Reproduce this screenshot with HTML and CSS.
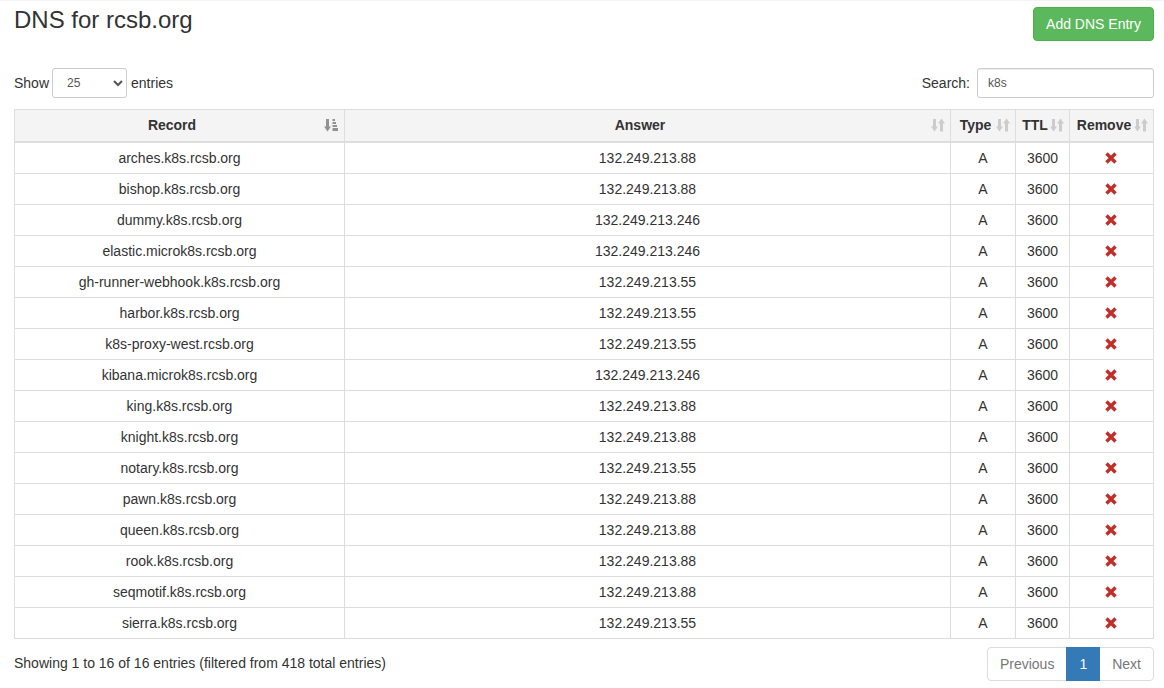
FILE: index.html
```html
<!DOCTYPE html>
<html>
<head>
<meta charset="utf-8">
<title>DNS for rcsb.org</title>
<link rel="stylesheet" href="styles.css">
</head>
<body>
<div class="page">
  <div class="topbar">
    <h1 class="title">DNS for rcsb.org</h1>
    <button class="btn-add">Add DNS Entry</button>
  </div>
  <div class="controls">
    <label class="length">Show <select class="sel"><option>25</option></select> entries</label>
    <label class="search">Search: <input class="search-input" type="text" value="k8s"></label>
  </div>
  <table class="dns">
    <colgroup>
      <col class="c-record"><col class="c-answer"><col class="c-type"><col class="c-ttl"><col class="c-remove">
    </colgroup>
    <thead>
      <tr>
        <th>Record<svg class="sort sort-asc" viewBox="0 0 14 14"><rect x="2" y="1" width="3" height="8"/><polygon points="0,8.5 7,8.5 3.5,13.5"/><rect x="8.5" y="1" width="2.5" height="2"/><rect x="8.5" y="4" width="3.5" height="2"/><rect x="8.5" y="7" width="4.5" height="2"/><rect x="8.5" y="10" width="5.5" height="3"/></svg></th>
        <th>Answer<svg class="sort" viewBox="0 0 14 14"><rect x="2" y="1" width="3" height="8"/><polygon points="0,8.5 7,8.5 3.5,13.5"/><rect x="9" y="5" width="3" height="8.5"/><polygon points="7,5.5 14,5.5 10.5,0.5"/></svg></th>
        <th>Type<svg class="sort" viewBox="0 0 14 14"><rect x="2" y="1" width="3" height="8"/><polygon points="0,8.5 7,8.5 3.5,13.5"/><rect x="9" y="5" width="3" height="8.5"/><polygon points="7,5.5 14,5.5 10.5,0.5"/></svg></th>
        <th>TTL<svg class="sort" viewBox="0 0 14 14"><rect x="2" y="1" width="3" height="8"/><polygon points="0,8.5 7,8.5 3.5,13.5"/><rect x="9" y="5" width="3" height="8.5"/><polygon points="7,5.5 14,5.5 10.5,0.5"/></svg></th>
        <th>Remove<svg class="sort" viewBox="0 0 14 14"><rect x="2" y="1" width="3" height="8"/><polygon points="0,8.5 7,8.5 3.5,13.5"/><rect x="9" y="5" width="3" height="8.5"/><polygon points="7,5.5 14,5.5 10.5,0.5"/></svg></th>
      </tr>
    </thead>
    <tbody>
      <tr><td>arches.k8s.rcsb.org</td><td>132.249.213.88</td><td>A</td><td>3600</td><td><svg class="rm" viewBox="0 0 12 12"><path d="M1.5 1.5L10.5 10.5M10.5 1.5L1.5 10.5"/></svg></td></tr>
      <tr><td>bishop.k8s.rcsb.org</td><td>132.249.213.88</td><td>A</td><td>3600</td><td><svg class="rm" viewBox="0 0 12 12"><path d="M1.5 1.5L10.5 10.5M10.5 1.5L1.5 10.5"/></svg></td></tr>
      <tr><td>dummy.k8s.rcsb.org</td><td>132.249.213.246</td><td>A</td><td>3600</td><td><svg class="rm" viewBox="0 0 12 12"><path d="M1.5 1.5L10.5 10.5M10.5 1.5L1.5 10.5"/></svg></td></tr>
      <tr><td>elastic.microk8s.rcsb.org</td><td>132.249.213.246</td><td>A</td><td>3600</td><td><svg class="rm" viewBox="0 0 12 12"><path d="M1.5 1.5L10.5 10.5M10.5 1.5L1.5 10.5"/></svg></td></tr>
      <tr><td>gh-runner-webhook.k8s.rcsb.org</td><td>132.249.213.55</td><td>A</td><td>3600</td><td><svg class="rm" viewBox="0 0 12 12"><path d="M1.5 1.5L10.5 10.5M10.5 1.5L1.5 10.5"/></svg></td></tr>
      <tr><td>harbor.k8s.rcsb.org</td><td>132.249.213.55</td><td>A</td><td>3600</td><td><svg class="rm" viewBox="0 0 12 12"><path d="M1.5 1.5L10.5 10.5M10.5 1.5L1.5 10.5"/></svg></td></tr>
      <tr><td>k8s-proxy-west.rcsb.org</td><td>132.249.213.55</td><td>A</td><td>3600</td><td><svg class="rm" viewBox="0 0 12 12"><path d="M1.5 1.5L10.5 10.5M10.5 1.5L1.5 10.5"/></svg></td></tr>
      <tr><td>kibana.microk8s.rcsb.org</td><td>132.249.213.246</td><td>A</td><td>3600</td><td><svg class="rm" viewBox="0 0 12 12"><path d="M1.5 1.5L10.5 10.5M10.5 1.5L1.5 10.5"/></svg></td></tr>
      <tr><td>king.k8s.rcsb.org</td><td>132.249.213.88</td><td>A</td><td>3600</td><td><svg class="rm" viewBox="0 0 12 12"><path d="M1.5 1.5L10.5 10.5M10.5 1.5L1.5 10.5"/></svg></td></tr>
      <tr><td>knight.k8s.rcsb.org</td><td>132.249.213.88</td><td>A</td><td>3600</td><td><svg class="rm" viewBox="0 0 12 12"><path d="M1.5 1.5L10.5 10.5M10.5 1.5L1.5 10.5"/></svg></td></tr>
      <tr><td>notary.k8s.rcsb.org</td><td>132.249.213.55</td><td>A</td><td>3600</td><td><svg class="rm" viewBox="0 0 12 12"><path d="M1.5 1.5L10.5 10.5M10.5 1.5L1.5 10.5"/></svg></td></tr>
      <tr><td>pawn.k8s.rcsb.org</td><td>132.249.213.88</td><td>A</td><td>3600</td><td><svg class="rm" viewBox="0 0 12 12"><path d="M1.5 1.5L10.5 10.5M10.5 1.5L1.5 10.5"/></svg></td></tr>
      <tr><td>queen.k8s.rcsb.org</td><td>132.249.213.88</td><td>A</td><td>3600</td><td><svg class="rm" viewBox="0 0 12 12"><path d="M1.5 1.5L10.5 10.5M10.5 1.5L1.5 10.5"/></svg></td></tr>
      <tr><td>rook.k8s.rcsb.org</td><td>132.249.213.88</td><td>A</td><td>3600</td><td><svg class="rm" viewBox="0 0 12 12"><path d="M1.5 1.5L10.5 10.5M10.5 1.5L1.5 10.5"/></svg></td></tr>
      <tr><td>seqmotif.k8s.rcsb.org</td><td>132.249.213.88</td><td>A</td><td>3600</td><td><svg class="rm" viewBox="0 0 12 12"><path d="M1.5 1.5L10.5 10.5M10.5 1.5L1.5 10.5"/></svg></td></tr>
      <tr><td>sierra.k8s.rcsb.org</td><td>132.249.213.55</td><td>A</td><td>3600</td><td><svg class="rm" viewBox="0 0 12 12"><path d="M1.5 1.5L10.5 10.5M10.5 1.5L1.5 10.5"/></svg></td></tr>
    </tbody>
  </table>
  <div class="footer">
    <div class="info">Showing 1 to 16 of 16 entries (filtered from 418 total entries)</div>
    <ul class="pager">
      <li class="pg disabled first">Previous</li>
      <li class="pg active">1</li>
      <li class="pg disabled last">Next</li>
    </ul>
  </div>
</div>
</body>
</html>
```
FILE: styles.css
```css
html, body {
  margin: 0;
  padding: 0;
  background: #fff;
}
body {
  font-family: "Liberation Sans", Arial, sans-serif;
  font-size: 14px;
  line-height: 20px;
  color: #333;
  border-top: 1px solid #f3f3f3;
}
.page {
  padding: 6px 10px 0 14px;
}
.topbar {
  display: flex;
  justify-content: space-between;
  align-items: flex-start;
}
.title {
  margin: 0;
  font-size: 24px;
  font-weight: normal;
  line-height: 26px;
  color: #333;
}
.btn-add {
  font-family: inherit;
  font-size: 14px;
  line-height: 20px;
  padding: 6px 12px;
  color: #fff;
  background: #5cb85c;
  border: 1px solid #4cae4c;
  border-radius: 4px;
  cursor: pointer;
}
.controls {
  display: flex;
  justify-content: space-between;
  align-items: center;
  margin-top: 27px;
  height: 30px;
}
.length, .search {
  font-weight: normal;
  display: flex;
  align-items: center;
}
.sel {
  width: 75px;
  height: 30px;
  margin: 0 4px 0 3px;
  padding: 5px 10px;
  font-family: inherit;
  font-size: 12px;
  color: #555;
  background: #fff;
  border: 1px solid #ccc;
  border-radius: 3px;
}
.search-input {
  height: 30px;
  box-sizing: border-box;
  margin-left: 7px;
  width: 177px;
  padding: 5px 10px;
  font-family: inherit;
  font-size: 12px;
  color: #555;
  border: 1px solid #ccc;
  border-radius: 3px;
  box-shadow: inset 0 1px 1px rgba(0,0,0,0.075);
}
.dns {
  width: 100%;
  margin-top: 11px;
  border-collapse: collapse;
  table-layout: fixed;
  border: 1px solid #ddd;
}
.c-record { width: 330px; }
.c-answer { width: 606px; }
.c-type { width: 65px; }
.c-ttl { width: 54px; }
.c-remove { width: 84px; }
.dns th {
  position: relative;
  background: #f4f4f4;
  font-weight: bold;
  text-align: center;
  padding: 5px 20px 6px 5px;
  line-height: 20px;
  border: 1px solid #ddd;
  border-bottom: 2px solid #ddd;
  white-space: nowrap;
}
.sort {
  position: absolute;
  right: 5px;
  top: 8px;
  width: 14px;
  height: 14px;
  fill: #333;
  opacity: 0.2;
}
.sort-asc {
  opacity: 0.5;
  right: 6px;
}
.dns td {
  text-align: center;
  padding: 5px;
  line-height: 20px;
  border: 1px solid #ddd;
}
.rm {
  width: 12px;
  height: 12px;
  vertical-align: -1px;
  margin-left: -2px;
  stroke: #c12e2a;
  stroke-width: 3.4;
  fill: none;
}
.footer {
  display: flex;
  justify-content: space-between;
  align-items: flex-start;
  margin-top: 8px;
}
.info {
  padding-top: 6px;
}
.pager {
  display: flex;
  list-style: none;
  margin: 0;
  padding: 0;
}
.pg {
  padding: 6px 12px;
  line-height: 20px;
  border: 1px solid #ddd;
  margin-left: -1px;
  color: #777;
  background: #fff;
}
.pg.first {
  border-radius: 4px 0 0 4px;
}
.pg.last {
  border-radius: 0 4px 4px 0;
}
.pg.active {
  background: #337ab7;
  border-color: #337ab7;
  color: #fff;
  position: relative;
}
```
